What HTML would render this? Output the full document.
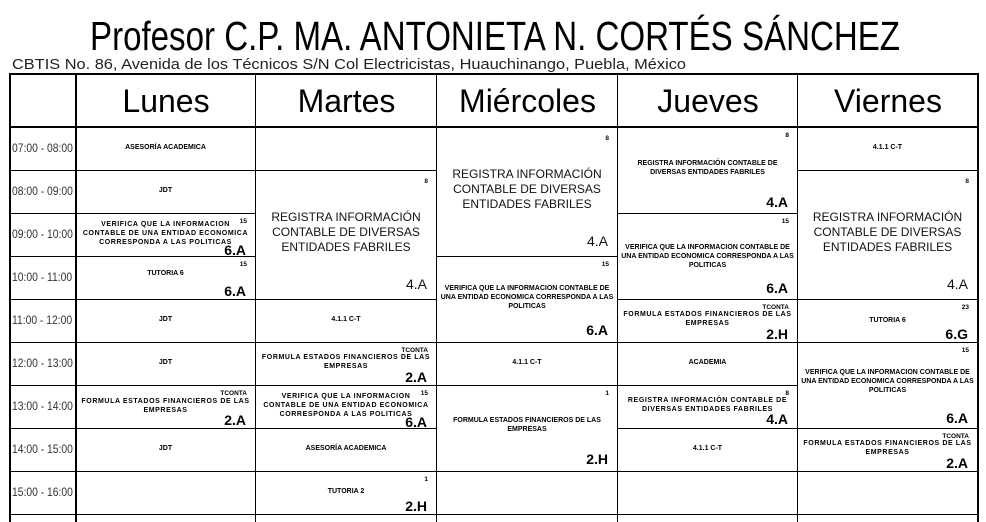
<!DOCTYPE html>
<html style="width:986px;height:522px;overflow:hidden"><head><meta charset="utf-8"><style>
*{margin:0;padding:0;box-sizing:border-box}
body{width:986px;height:522px;background:#fff;position:relative;overflow:hidden;font-family:"Liberation Sans",Arial,sans-serif;color:#000}
.c{position:absolute;border-right:1px solid #000;border-bottom:1px solid #000;display:flex;align-items:center;justify-content:center;text-align:center}
.e{position:absolute;top:515px;height:7px;border-right:1px solid #000}
.s{font-size:7px;font-weight:bold;line-height:9px}
.sp{letter-spacing:.6px}
.b{font-size:12px;line-height:15px;color:#111}
.n{position:absolute;right:8px;top:3px;font-size:6.5px;font-weight:bold;letter-spacing:0}
.k{position:absolute;right:9px;bottom:3px;font-size:14px;letter-spacing:0}
.kb{font-weight:bold}
.tm{position:absolute;left:12px;font-size:12px;color:#333;transform:scaleX(.86);transform-origin:left}
.h{position:absolute;top:74px;height:53px;font-size:32px;display:flex;align-items:center;justify-content:center;padding-top:2px}
</style></head><body>
<svg width="986" height="74" style="position:absolute;left:0;top:0">
<text x="90" y="50" font-family="Liberation Sans" font-size="41" textLength="810" lengthAdjust="spacingAndGlyphs">Profesor C.P. MA. ANTONIETA N. CORTÉS SÁNCHEZ</text>
<text x="12" y="69" font-family="Liberation Sans" font-size="14.5" fill="#222" textLength="674" lengthAdjust="spacingAndGlyphs">CBTIS No. 86, Avenida de los Técnicos S/N Col Electricistas, Huauchinango, Puebla, México</text>
</svg>

<div class="c" style="left:10px;top:128px;width:66px;height:43px"></div>
<div class="c" style="left:10px;top:171px;width:66px;height:43px"></div>
<div class="c" style="left:10px;top:214px;width:66px;height:43px"></div>
<div class="c" style="left:10px;top:257px;width:66px;height:43px"></div>
<div class="c" style="left:10px;top:300px;width:66px;height:43px"></div>
<div class="c" style="left:10px;top:343px;width:66px;height:43px"></div>
<div class="c" style="left:10px;top:386px;width:66px;height:43px"></div>
<div class="c" style="left:10px;top:429px;width:66px;height:43px"></div>
<div class="c" style="left:10px;top:472px;width:66px;height:43px"></div>
<div class="tm" style="top:141px">07:00 - 08:00</div>
<div class="tm" style="top:184px">08:00 - 09:00</div>
<div class="tm" style="top:227px">09:00 - 10:00</div>
<div class="tm" style="top:270px">10:00 - 11:00</div>
<div class="tm" style="top:313px">11:00 - 12:00</div>
<div class="tm" style="top:356px">12:00 - 13:00</div>
<div class="tm" style="top:399px">13:00 - 14:00</div>
<div class="tm" style="top:442px">14:00 - 15:00</div>
<div class="tm" style="top:485px">15:00 - 16:00</div>

<!-- Lunes -->
<div class="c s" style="left:76px;top:128px;width:180px;height:43px"><span style="margin-top:-4px">ASESORÍA ACADEMICA</span></div>
<div class="c s" style="left:76px;top:171px;width:180px;height:43px"><span style="margin-top:-4px">JDT</span></div>
<div class="c s sp" style="left:76px;top:214px;width:180px;height:43px"><span class="n">15</span><span style="margin-top:-4px">VERIFICA QUE LA INFORMACION<br>CONTABLE DE UNA ENTIDAD ECONOMICA<br>CORRESPONDA A LAS POLITICAS</span><span class="k kb" style="bottom:1px">6.A</span></div>
<div class="c s" style="left:76px;top:257px;width:180px;height:43px"><span class="n">15</span><span style="margin-top:-10px">TUTORIA 6</span><span class="k kb">6.A</span></div>
<div class="c s" style="left:76px;top:300px;width:180px;height:43px"><span style="margin-top:-4px">JDT</span></div>
<div class="c s" style="left:76px;top:343px;width:180px;height:43px"><span style="margin-top:-4px">JDT</span></div>
<div class="c s sp" style="left:76px;top:386px;width:180px;height:43px"><span class="n">TCONTA</span><span style="margin-top:-3px">FORMULA ESTADOS FINANCIEROS DE LAS<br>EMPRESAS</span><span class="k kb">2.A</span></div>
<div class="c s" style="left:76px;top:429px;width:180px;height:43px"><span style="margin-top:-4px">JDT</span></div>
<div class="c" style="left:76px;top:472px;width:180px;height:43px"></div>
<div class="e" style="left:76px;width:180px"></div>

<!-- Martes -->
<div class="c" style="left:256px;top:128px;width:181px;height:43px"></div>
<div class="c b" style="left:256px;top:171px;width:181px;height:129px"><span class="n">8</span><span style="margin-top:-5px">REGISTRA INFORMACIÓN<br>CONTABLE DE DIVERSAS<br>ENTIDADES FABRILES</span><span class="k" style="bottom:7px">4.A</span></div>
<div class="c s" style="left:256px;top:300px;width:181px;height:43px"><span style="margin-top:-4px">4.1.1 C-T</span></div>
<div class="c s sp" style="left:256px;top:343px;width:181px;height:43px"><span class="n">TCONTA</span><span style="margin-top:-5px">FORMULA ESTADOS FINANCIEROS DE LAS<br>EMPRESAS</span><span class="k kb">2.A</span></div>
<div class="c s sp" style="left:256px;top:386px;width:181px;height:43px"><span class="n">15</span><span style="margin-top:-4px">VERIFICA QUE LA INFORMACION<br>CONTABLE DE UNA ENTIDAD ECONOMICA<br>CORRESPONDA A LAS POLITICAS</span><span class="k kb" style="bottom:1px">6.A</span></div>
<div class="c s" style="left:256px;top:429px;width:181px;height:43px"><span style="margin-top:-4px">ASESORÍA ACADEMICA</span></div>
<div class="c s" style="left:256px;top:472px;width:181px;height:43px"><span class="n">1</span><span style="margin-top:-4px">TUTORIA 2</span><span class="k kb">2.H</span></div>
<div class="e" style="left:256px;width:181px"></div>

<!-- Miércoles -->
<div class="c b" style="left:437px;top:128px;width:181px;height:129px"><span class="n">8</span><span style="margin-top:-6px">REGISTRA INFORMACIÓN<br>CONTABLE DE DIVERSAS<br>ENTIDADES FABRILES</span><span class="k" style="bottom:7px">4.A</span></div>
<div class="c s" style="left:437px;top:257px;width:181px;height:86px"><span class="n">15</span><span style="margin-top:-5px">VERIFICA QUE LA INFORMACION CONTABLE DE<br>UNA ENTIDAD ECONOMICA CORRESPONDA A LAS<br>POLITICAS</span><span class="k" style="bottom:7px">6.A</span></div>
<div class="c s" style="left:437px;top:343px;width:181px;height:43px"><span style="margin-top:-4px">4.1.1 C-T</span></div>
<div class="c s" style="left:437px;top:386px;width:181px;height:86px"><span class="n">1</span><span style="margin-top:-8px">FORMULA ESTADOS FINANCIEROS DE LAS<br>EMPRESAS</span><span class="k" style="bottom:7px">2.H</span></div>
<div class="c" style="left:437px;top:472px;width:181px;height:43px"></div>
<div class="e" style="left:437px;width:181px"></div>

<!-- Jueves -->
<div class="c s" style="left:618px;top:128px;width:180px;height:86px"><span class="n">8</span><span style="margin-top:-5px">REGISTRA INFORMACIÓN CONTABLE DE<br>DIVERSAS ENTIDADES FABRILES</span><span class="k" style="bottom:6px">4.A</span></div>
<div class="c s" style="left:618px;top:214px;width:180px;height:86px"><span class="n">15</span><span style="margin-top:0px">VERIFICA QUE LA INFORMACION CONTABLE DE<br>UNA ENTIDAD ECONOMICA CORRESPONDA A LAS<br>POLITICAS</span><span class="k" style="bottom:6px">6.A</span></div>
<div class="c s sp" style="left:618px;top:300px;width:180px;height:43px"><span class="n">TCONTA</span><span style="margin-top:-5px">FORMULA ESTADOS FINANCIEROS DE LAS<br>EMPRESAS</span><span class="k kb">2.H</span></div>
<div class="c s" style="left:618px;top:343px;width:180px;height:43px"><span style="margin-top:-4px">ACADEMIA</span></div>
<div class="c s sp" style="left:618px;top:386px;width:180px;height:43px"><span class="n">8</span><span style="margin-top:-4px">REGISTRA INFORMACIÓN CONTABLE DE<br>DIVERSAS ENTIDADES FABRILES</span><span class="k kb" style="bottom:4px">4.A</span></div>
<div class="c s" style="left:618px;top:429px;width:180px;height:43px"><span style="margin-top:-4px">4.1.1 C-T</span></div>
<div class="c" style="left:618px;top:472px;width:180px;height:43px"></div>
<div class="e" style="left:618px;width:180px"></div>

<!-- Viernes -->
<div class="c s" style="left:798px;top:128px;width:180px;height:43px"><span style="margin-top:-4px">4.1.1 C-T</span></div>
<div class="c b" style="left:798px;top:171px;width:180px;height:129px"><span class="n">8</span><span style="margin-top:-5px">REGISTRA INFORMACIÓN<br>CONTABLE DE DIVERSAS<br>ENTIDADES FABRILES</span><span class="k" style="bottom:7px">4.A</span></div>
<div class="c s" style="left:798px;top:300px;width:180px;height:43px"><span class="n">23</span><span style="margin-top:-2px">TUTORIA 6</span><span class="k kb">6.G</span></div>
<div class="c s" style="left:798px;top:343px;width:180px;height:86px"><span class="n">15</span><span style="margin-top:-8px">VERIFICA QUE LA INFORMACION CONTABLE DE<br>UNA ENTIDAD ECONOMICA CORRESPONDA A LAS<br>POLITICAS</span><span class="k" style="bottom:5px">6.A</span></div>
<div class="c s sp" style="left:798px;top:429px;width:180px;height:43px"><span class="n">TCONTA</span><span style="margin-top:-5px">FORMULA ESTADOS FINANCIEROS DE LAS<br>EMPRESAS</span><span class="k kb">2.A</span></div>
<div class="c" style="left:798px;top:472px;width:180px;height:43px"></div>
<div class="e" style="left:798px;width:180px"></div>

<div class="h" style="left:76px;width:180px">Lunes</div>
<div class="h" style="left:256px;width:181px">Martes</div>
<div class="h" style="left:437px;width:181px">Miércoles</div>
<div class="h" style="left:618px;width:180px">Jueves</div>
<div class="h" style="left:798px;width:180px">Viernes</div>
<div style="position:absolute;left:255px;top:74px;width:1px;height:53px;background:#000"></div>
<div style="position:absolute;left:436px;top:74px;width:1px;height:53px;background:#000"></div>
<div style="position:absolute;left:617px;top:74px;width:1px;height:53px;background:#000"></div>
<div style="position:absolute;left:797px;top:74px;width:1px;height:53px;background:#000"></div>
<div style="position:absolute;left:75px;top:74px;width:2px;height:448px;background:#000"></div>
<div style="position:absolute;left:9px;top:73px;width:970px;height:2px;background:#000"></div>
<div style="position:absolute;left:9px;top:126px;width:970px;height:2px;background:#000"></div>
<div style="position:absolute;left:9px;top:73px;width:2px;height:449px;background:#000"></div>
<div style="position:absolute;left:977px;top:73px;width:2px;height:449px;background:#000"></div>
</body></html>
